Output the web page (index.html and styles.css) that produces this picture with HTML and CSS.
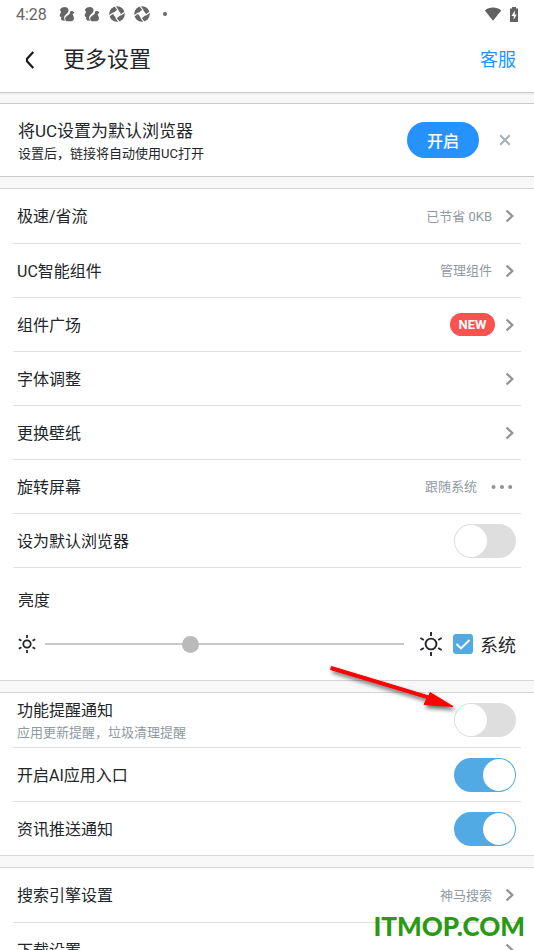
FILE: index.html
```html
<!DOCTYPE html>
<html lang="zh-CN">
<head>
<meta charset="utf-8">
<meta name="viewport" content="width=device-width, initial-scale=1">
<title>更多设置</title>
<link rel="stylesheet" href="styles.css">
</head>
<body>
<svg class="defs" aria-hidden="true">
  <symbol id="chevron" viewBox="0 0 10 14"><path d="M1.500 1.500 7.300 7 1.500 12.500" fill="none" stroke="#959595" stroke-width="2.300"/></symbol>
  <symbol id="squirrel" viewBox="0 0 15 15"><path d="M3 1.500C5 .2 8 .8 8.800 3 9.200 4.500 8.600 5.800 7.600 6.700 6.200 8 4.600 9.400 4.800 11.400L5.600 13.800 3 13.500C1.500 12.500 1.800 11.500 2.400 10.800.8 10 .2 8.800 1 7.500 1.600 6.500 2 6 1.800 5L.8 4C1.200 2.700 2 2 3 1.500Z" fill="#666"/><path d="M10.200 5.300C11 4.200 13.800 4.300 14.300 6.300L12.800 7.800C13 8.800 14 10 14 11.400 14 13.400 12.600 14.300 10.800 14.300H7C5.600 13.300 5.400 11.500 6.300 10.300 7.500 8.800 9.900 8 10.200 6.800Z" fill="#666"/></symbol>
  <symbol id="shutter" viewBox="0 0 16 16"><circle cx="8" cy="8" r="7.800" fill="#666"/><path d="M8.600 3.600 12.400 8.600 7.400 12.400 3.600 7.400Z" fill="#fff"/><path d="M9.300 4.500 5.900 0M11.500 9.300 16 5.900M6.700 11.500 10.100 16M4.500 6.700 0 10.100" stroke="#fff" stroke-width="1.200"/></symbol>
</svg>

<div class="statusbar">
  <span class="clock">4:28</span>
  <svg class="s-icon"><use href="#squirrel"/></svg>
  <svg class="s-icon"><use href="#squirrel"/></svg>
  <svg class="s-icon"><use href="#shutter"/></svg>
  <svg class="s-icon"><use href="#shutter"/></svg>
  <span class="dot"></span>
  <svg class="wifi" viewBox="0 0 18 14"><path d="M.8 3.400C5.500-.4 12.500-.4 17.200 3.400L9 13.800Z" fill="#616161"/></svg>
  <svg class="battery" viewBox="0 0 9 15"><path d="M2.500 0h4v1.600H8.500V15H.5V1.600h2Z" fill="#616161"/><path d="M5.300 3.500 2 8.900h2.200v3.900L7.200 7.400H5.300Z" fill="#fff"/></svg>
</div>

<header class="topbar">
  <button class="back" aria-label="返回"><svg viewBox="0 0 10 18"><path d="M8.300 1 2 7.800v2.400L8.300 17" fill="none" stroke="#191c20" stroke-width="2.200"/></svg></button>
  <h1>更多设置</h1>
  <a class="service" href="#">客服</a>
</header>

<main>
  <section class="panel banner">
    <div class="grow">
      <h2>将UC设置为默认浏览器</h2>
      <p>设置后，链接将自动使用UC打开</p>
    </div>
    <button class="enable">开启</button>
    <button class="close" aria-label="关闭"><svg viewBox="0 0 12 12"><path d="M1.200 1.200 10.800 10.800M10.800 1.200 1.200 10.800" stroke="#aab0b4" stroke-width="2.100"/></svg></button>
  </section>

  <section class="panel list">
    <a class="row" href="#"><span class="grow">极速/省流</span><span class="value">已节省 0KB</span><svg class="chev"><use href="#chevron"/></svg></a>
    <a class="row" href="#"><span class="grow">UC智能组件</span><span class="value">管理组件</span><svg class="chev"><use href="#chevron"/></svg></a>
    <a class="row" href="#"><span class="grow">组件广场</span><span class="badge">NEW</span><svg class="chev"><use href="#chevron"/></svg></a>
    <a class="row" href="#"><span class="grow">字体调整</span><svg class="chev"><use href="#chevron"/></svg></a>
    <a class="row" href="#"><span class="grow">更换壁纸</span><svg class="chev"><use href="#chevron"/></svg></a>
    <a class="row" href="#"><span class="grow">旋转屏幕</span><span class="value">跟随系统</span><svg class="more" viewBox="0 0 22 4"><g fill="#929292"><circle cx="2.500" cy="2" r="2"/><circle cx="11" cy="2" r="2"/><circle cx="19.200" cy="2" r="2"/></g></svg></a>
    <label class="row"><span class="grow">设为默认浏览器</span><input class="switch" type="checkbox"></label>
    <div class="brightness">
      <label for="level">亮度</label>
      <div class="slider">
        <svg class="sun-small" viewBox="0 0 18 18"><g fill="none" stroke="#22262a" stroke-width="1.800"><circle cx="9" cy="9" r="3.700"/><path d="M9 0v3M9 15v3M.8 4.300l2.600 1.500M14.600 12.200l2.600 1.500M.8 13.700l2.600-1.500M14.600 5.800l2.600-1.500"/></g></svg>
        <input id="level" class="range" type="range" min="0" max="100" value="40">
        <svg class="sun-large" viewBox="0 0 24 24"><g fill="none" stroke="#22262a" stroke-width="1.900"><circle cx="12" cy="12" r="5.400"/><path d="M12 0v4M12 20v4M1.400 6l3.400 2M19.200 16l3.400 2M1.400 18l3.400-2M19.200 8l3.400-2"/></g></svg>
        <label class="system"><span class="box"><input type="checkbox" checked><svg viewBox="0 0 20 20"><path d="m3.500 10 4.500 4.500 8.500-8.500" fill="none" stroke="#fff" stroke-width="1.900"/></svg></span>系统</label>
      </div>
    </div>
  </section>

  <section class="panel list">
    <label class="row notify"><span class="grow">功能提醒通知<small>应用更新提醒，垃圾清理提醒</small></span><input class="switch" type="checkbox">
      <svg class="arrow" viewBox="0 0 140 60" aria-hidden="true"><path d="M8.500 11.500 7.500 14.500 104 43.500 101 49.500 130 51.500 107 37.500 106 41Z" fill="#f00" stroke="#f00" stroke-linejoin="round"/></svg>
    </label>
    <label class="row"><span class="grow">开启AI应用入口</span><input class="switch" type="checkbox" checked></label>
    <label class="row"><span class="grow">资讯推送通知</span><input class="switch" type="checkbox" checked></label>
  </section>

  <section class="panel list">
    <a class="row" href="#"><span class="grow">搜索引擎设置</span><span class="value">神马搜索</span><svg class="chev"><use href="#chevron"/></svg></a>
    <a class="row" href="#"><span class="grow">下载设置</span><svg class="chev"><use href="#chevron"/></svg></a>
  </section>
</main>
<div class="watermark">ITMOP.COM</div>
</body>
</html>
```
FILE: styles.css
```css
* { box-sizing: border-box; }

body {
  margin: 0;
  height: 100vh;
  overflow: hidden;
  position: relative;
  background: #f8f8f8;
  color: #22262a;
  font-family: Roboto, "Noto Sans CJK SC", sans-serif;
  font-size: 16px;
}

h1, h2, p { margin: 0; font-weight: 400; }
a { color: inherit; text-decoration: none; }
button { border: 0; padding: 0; background: none; font: inherit; }
svg { display: block; flex: none; }
.defs { position: absolute; width: 0; height: 0; }
.grow { flex: 1; min-width: 0; }

/* status bar */
.statusbar {
  display: flex;
  align-items: center;
  height: 28px;
  padding: 0 15px 0 16px;
  background: #fff;
  color: #666;
}
.clock { margin-right: 12px; }
.s-icon { width: 16px; height: 16px; margin-right: 9px; }
.dot { width: 4px; height: 4px; margin-left: 4px; border-radius: 50%; background: #666; }
.wifi { width: 18px; height: 14px; margin-left: auto; }
.battery { width: 10px; height: 15px; margin-left: 7px; }

/* title bar */
.topbar {
  display: flex;
  align-items: center;
  height: 65px;
  padding: 0 18px 0 25px;
  border-bottom: 1px solid #ccc;
  background: #fff;
  box-shadow: 0 1px 2px rgba(0, 0, 0, .08);
}
.back svg { width: 10px; height: 18px; }
.topbar h1 { flex: 1; margin-left: 28px; font-size: 22px; line-height: 32px; }
.service { color: #2692ff; font-size: 18px; line-height: 24px; }

main { display: flex; flex-direction: column; gap: 11px; padding-top: 10px; }
.panel { background: #fff; border: solid #d6d6d6; border-width: 1px 0; }

.banner {
  display: flex;
  align-items: center;
  height: 74px;
  padding: 0 23px 0 18px;
  border-color: #c8c8c8;
}
.banner .grow { padding-top: 3px; }
.banner h2 { font-size: 17px; line-height: 24px; }
.banner p { font-size: 13px; line-height: 22px; }
.enable {
  width: 72px;
  height: 36px;
  border-radius: 18px;
  background: #2692ff;
  color: #fff;
  font-weight: 500;
}
.close { margin-left: 20px; }
.close svg { width: 12px; height: 12px; }

/* setting rows */
.list { padding: 0 13px; }
.row {
  position: relative;
  display: flex;
  align-items: center;
  height: 54px;
  padding: 0 5px 0 4px;
}
.row .grow, .value { padding-bottom: 2px; }
.row + .row, .brightness { border-top: 1px solid #dfe1e1; }
.value { color: #8f9aa1; font-size: 13px; }
.chev { width: 10px; height: 14px; margin: 0 1px 0 13px; }
.more { width: 22px; height: 4px; margin: 0 3px 0 14px; }
.badge {
  width: 45px;
  border-radius: 12px;
  background: #f9524f;
  color: #fff;
  font-size: 13px;
  font-weight: 700;
  line-height: 23px;
  text-align: center;
}
.badge + .chev { margin-left: 10px; }

.switch {
  appearance: none;
  display: flex;
  width: 62px;
  height: 34px;
  margin: 0;
  padding: 1px;
  border-radius: 17px;
  background: #dedede;
}
.switch::before {
  content: "";
  width: 32px;
  height: 32px;
  border-radius: 50%;
  background: #fff;
}
.switch:checked { justify-content: flex-end; background: #52aae4; }

.brightness { padding: 21px 5px 24px 5px; }
.brightness > label { display: block; line-height: 24px; }
.slider { display: flex; align-items: center; height: 24px; margin-top: 19px; }
.sun-small { width: 18px; height: 18px; }
.range {
  appearance: none;
  flex: 1;
  min-width: 0;
  height: 18px;
  margin: 0 15px 0 9px;
  background: linear-gradient(#c8c8c8, #c8c8c8) center / 100% 2px no-repeat;
}
.range::-webkit-slider-thumb {
  appearance: none;
  width: 17px;
  height: 17px;
  border-radius: 50%;
  background: #bababa;
}
.sun-large { width: 24px; height: 24px; }
.system { display: flex; align-items: center; margin-left: 10px; font-size: 18px; }
.box { display: grid; margin-right: 7px; }
.box > * { grid-area: 1 / 1; width: 20px; height: 20px; margin: 0; }
.box input { appearance: none; border-radius: 3px; background: #52aae4; }
.box svg { position: relative; pointer-events: none; }

.notify .grow { padding: 4px 0 0; line-height: 22px; }
.notify small { display: block; color: #8f9aa1; font-size: 13px; }
.arrow {
  position: absolute;
  top: -38px;
  right: 58px;
  width: 140px;
  height: 60px;
  filter: drop-shadow(2px 3px 2px rgba(0, 0, 0, .6));
}

.watermark {
  position: absolute;
  right: 9px;
  bottom: 6px;
  color: #2a9a14;
  font: 900 26px/36px Lato, sans-serif;
}
```
